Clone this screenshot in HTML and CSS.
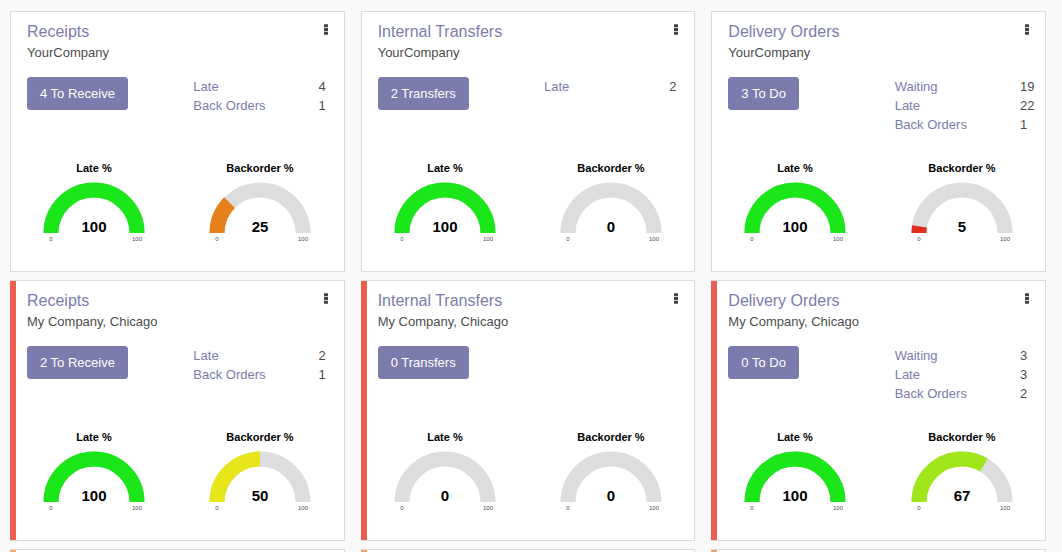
FILE: index.html
```
<!DOCTYPE html>
<html lang="en">
<head>
<meta charset="utf-8">
<meta name="viewport" content="width=device-width, initial-scale=1">
<title>Inventory Overview</title>
<link rel="stylesheet" href="styles.css">
</head>
<body>
<svg class="defs" aria-hidden="true">
  <symbol id="dots" viewBox="0 0 4 11"><path d="M0 .3h4v3H0zM0 4h4v3H0zM0 7.700h4v3H0z" fill="#444"/></symbol>
</svg>
<main class="board">

  <article class="card">
    <header class="head">
      <div><h2 class="title"><a href="#">Receipts</a></h2><p class="company">YourCompany</p></div>
      <button class="menu" type="button" aria-label="More options"><svg><use href="#dots"/></svg></button>
    </header>
    <div class="body">
      <div><button class="primary" type="button">4 To Receive</button></div>
      <ul class="stats">
        <li><a href="#">Late</a><span>4</span></li>
        <li><a href="#">Back Orders</a><span>1</span></li>
      </ul>
    </div>
    <div class="gauges">
      <svg class="gauge" viewBox="0 0 120 90"><text class="name" x="60" y="14">Late %</text><path class="track" d="M17 75A43 43 0 0 1 103 75"/><path class="fill" stroke="#1ae61a" d="M17 75A43 43 0 0 1 103 75"/><text class="value" x="60" y="74">100</text><text class="limit" x="17" y="83">0</text><text class="limit" x="103" y="83">100</text></svg>
      <svg class="gauge" viewBox="0 0 120 90"><text class="name" x="60" y="14">Backorder %</text><path class="track" d="M17 75A43 43 0 0 1 103 75"/><path class="fill" stroke="#e6801a" pathLength="100" stroke-dasharray="25 200" d="M17 75A43 43 0 0 1 103 75"/><text class="value" x="60" y="74">25</text><text class="limit" x="17" y="83">0</text><text class="limit" x="103" y="83">100</text></svg>
    </div>
  </article>

  <article class="card">
    <header class="head">
      <div><h2 class="title"><a href="#">Internal Transfers</a></h2><p class="company">YourCompany</p></div>
      <button class="menu" type="button" aria-label="More options"><svg><use href="#dots"/></svg></button>
    </header>
    <div class="body">
      <div><button class="primary" type="button">2 Transfers</button></div>
      <ul class="stats">
        <li><a href="#">Late</a><span>2</span></li>
      </ul>
    </div>
    <div class="gauges">
      <svg class="gauge" viewBox="0 0 120 90"><text class="name" x="60" y="14">Late %</text><path class="track" d="M17 75A43 43 0 0 1 103 75"/><path class="fill" stroke="#1ae61a" d="M17 75A43 43 0 0 1 103 75"/><text class="value" x="60" y="74">100</text><text class="limit" x="17" y="83">0</text><text class="limit" x="103" y="83">100</text></svg>
      <svg class="gauge" viewBox="0 0 120 90"><text class="name" x="60" y="14">Backorder %</text><path class="track" d="M17 75A43 43 0 0 1 103 75"/><text class="value" x="60" y="74">0</text><text class="limit" x="17" y="83">0</text><text class="limit" x="103" y="83">100</text></svg>
    </div>
  </article>

  <article class="card">
    <header class="head">
      <div><h2 class="title"><a href="#">Delivery Orders</a></h2><p class="company">YourCompany</p></div>
      <button class="menu" type="button" aria-label="More options"><svg><use href="#dots"/></svg></button>
    </header>
    <div class="body">
      <div><button class="primary" type="button">3 To Do</button></div>
      <ul class="stats">
        <li><a href="#">Waiting</a><span>19</span></li>
        <li><a href="#">Late</a><span>22</span></li>
        <li><a href="#">Back Orders</a><span>1</span></li>
      </ul>
    </div>
    <div class="gauges">
      <svg class="gauge" viewBox="0 0 120 90"><text class="name" x="60" y="14">Late %</text><path class="track" d="M17 75A43 43 0 0 1 103 75"/><path class="fill" stroke="#1ae61a" d="M17 75A43 43 0 0 1 103 75"/><text class="value" x="60" y="74">100</text><text class="limit" x="17" y="83">0</text><text class="limit" x="103" y="83">100</text></svg>
      <svg class="gauge" viewBox="0 0 120 90"><text class="name" x="60" y="14">Backorder %</text><path class="track" d="M17 75A43 43 0 0 1 103 75"/><path class="fill" stroke="#e02d1b" pathLength="100" stroke-dasharray="5 200" d="M17 75A43 43 0 0 1 103 75"/><text class="value" x="60" y="74">5</text><text class="limit" x="17" y="83">0</text><text class="limit" x="103" y="83">100</text></svg>
    </div>
  </article>

  <article class="card red">
    <header class="head">
      <div><h2 class="title"><a href="#">Receipts</a></h2><p class="company">My Company, Chicago</p></div>
      <button class="menu" type="button" aria-label="More options"><svg><use href="#dots"/></svg></button>
    </header>
    <div class="body">
      <div><button class="primary" type="button">2 To Receive</button></div>
      <ul class="stats">
        <li><a href="#">Late</a><span>2</span></li>
        <li><a href="#">Back Orders</a><span>1</span></li>
      </ul>
    </div>
    <div class="gauges">
      <svg class="gauge" viewBox="0 0 120 90"><text class="name" x="60" y="14">Late %</text><path class="track" d="M17 75A43 43 0 0 1 103 75"/><path class="fill" stroke="#1ae61a" d="M17 75A43 43 0 0 1 103 75"/><text class="value" x="60" y="74">100</text><text class="limit" x="17" y="83">0</text><text class="limit" x="103" y="83">100</text></svg>
      <svg class="gauge" viewBox="0 0 120 90"><text class="name" x="60" y="14">Backorder %</text><path class="track" d="M17 75A43 43 0 0 1 103 75"/><path class="fill" stroke="#e6e61a" pathLength="100" stroke-dasharray="50 200" d="M17 75A43 43 0 0 1 103 75"/><text class="value" x="60" y="74">50</text><text class="limit" x="17" y="83">0</text><text class="limit" x="103" y="83">100</text></svg>
    </div>
  </article>

  <article class="card red">
    <header class="head">
      <div><h2 class="title"><a href="#">Internal Transfers</a></h2><p class="company">My Company, Chicago</p></div>
      <button class="menu" type="button" aria-label="More options"><svg><use href="#dots"/></svg></button>
    </header>
    <div class="body">
      <div><button class="primary" type="button">0 Transfers</button></div>
    </div>
    <div class="gauges">
      <svg class="gauge" viewBox="0 0 120 90"><text class="name" x="60" y="14">Late %</text><path class="track" d="M17 75A43 43 0 0 1 103 75"/><text class="value" x="60" y="74">0</text><text class="limit" x="17" y="83">0</text><text class="limit" x="103" y="83">100</text></svg>
      <svg class="gauge" viewBox="0 0 120 90"><text class="name" x="60" y="14">Backorder %</text><path class="track" d="M17 75A43 43 0 0 1 103 75"/><text class="value" x="60" y="74">0</text><text class="limit" x="17" y="83">0</text><text class="limit" x="103" y="83">100</text></svg>
    </div>
  </article>

  <article class="card red">
    <header class="head">
      <div><h2 class="title"><a href="#">Delivery Orders</a></h2><p class="company">My Company, Chicago</p></div>
      <button class="menu" type="button" aria-label="More options"><svg><use href="#dots"/></svg></button>
    </header>
    <div class="body">
      <div><button class="primary" type="button">0 To Do</button></div>
      <ul class="stats">
        <li><a href="#">Waiting</a><span>3</span></li>
        <li><a href="#">Late</a><span>3</span></li>
        <li><a href="#">Back Orders</a><span>2</span></li>
      </ul>
    </div>
    <div class="gauges">
      <svg class="gauge" viewBox="0 0 120 90"><text class="name" x="60" y="14">Late %</text><path class="track" d="M17 75A43 43 0 0 1 103 75"/><path class="fill" stroke="#1ae61a" d="M17 75A43 43 0 0 1 103 75"/><text class="value" x="60" y="74">100</text><text class="limit" x="17" y="83">0</text><text class="limit" x="103" y="83">100</text></svg>
      <svg class="gauge" viewBox="0 0 120 90"><text class="name" x="60" y="14">Backorder %</text><path class="track" d="M17 75A43 43 0 0 1 103 75"/><path class="fill" stroke="#a1e61a" pathLength="100" stroke-dasharray="67 200" d="M17 75A43 43 0 0 1 103 75"/><text class="value" x="60" y="74">67</text><text class="limit" x="17" y="83">0</text><text class="limit" x="103" y="83">100</text></svg>
    </div>
  </article>

  <article class="card orange"></article>
  <article class="card orange"></article>
  <article class="card orange"></article>
</main>
</body>
</html>
```
FILE: styles.css
```
* { box-sizing: border-box; }
body {
  height: 100vh;
  margin: 0;
  background: #f9f9f9;
  color: #4c4c4c;
  font: 13px/19px "Liberation Sans", Arial, sans-serif;
}
a { color: #7c7bad; text-decoration: none; }
h2, p, ul { margin: 0; padding: 0; }
.defs { display: none; }

.board {
  display: grid;
  grid-template-columns: repeat(3, minmax(0, 1fr));
  align-content: start;
  gap: 8px 16px;
  height: 100%;
  padding: 11px 16px 8px 10px;
  overflow-y: auto;
  scrollbar-width: none;
}
.card {
  display: flex;
  flex-direction: column;
  min-height: 261px;
  padding: 8px 0 23px;
  background: #fff;
  border: 1px solid #d8dadb;
}
.red, .orange {
  background-repeat: no-repeat;
  background-size: 6px 100%;
  border-left: 0;
  padding-left: 1px;
}
.red { background-image: linear-gradient(#eb5f51, #eb5f51); }
.orange { background-image: linear-gradient(#f0a56b, #f0a56b); }

.head {
  display: flex;
  justify-content: space-between;
  align-items: flex-start;
  padding: 0 16px;
}
.title { font-size: 16px; line-height: 23px; font-weight: 400; }
.menu {
  display: flex;
  padding: 4px 0;
  background: none;
  border: 0;
}
.menu svg { width: 4px; height: 11px; }

.body {
  display: grid;
  grid-template-columns: minmax(0, 1fr) minmax(0, 1fr);
  gap: 32px;
  min-height: 72px;
  padding: 15px 16px 0;
}
.primary {
  height: 33px;
  padding: 0 12px;
  background: #7c7bad;
  border: 1px solid #7c7bad;
  border-radius: 3px;
  color: #fff;
  font: inherit;
  white-space: nowrap;
}
.stats { list-style: none; margin-right: -16px; }
.stats li { display: grid; grid-template-columns: 5fr 1fr; }

.gauges {
  display: grid;
  grid-template-columns: 1fr 1fr;
  justify-items: center;
  margin-top: auto;
}
.gauge { width: 120px; height: 90px; text-anchor: middle; }
.track, .fill { fill: none; stroke-width: 15; }
.track { stroke: #ddd; }
.name { font-size: 11px; font-weight: 700; fill: #000; }
.value { font-size: 15px; font-weight: 700; fill: #000; }
.limit { font-size: 6px; fill: #4c4c4c; }
```
